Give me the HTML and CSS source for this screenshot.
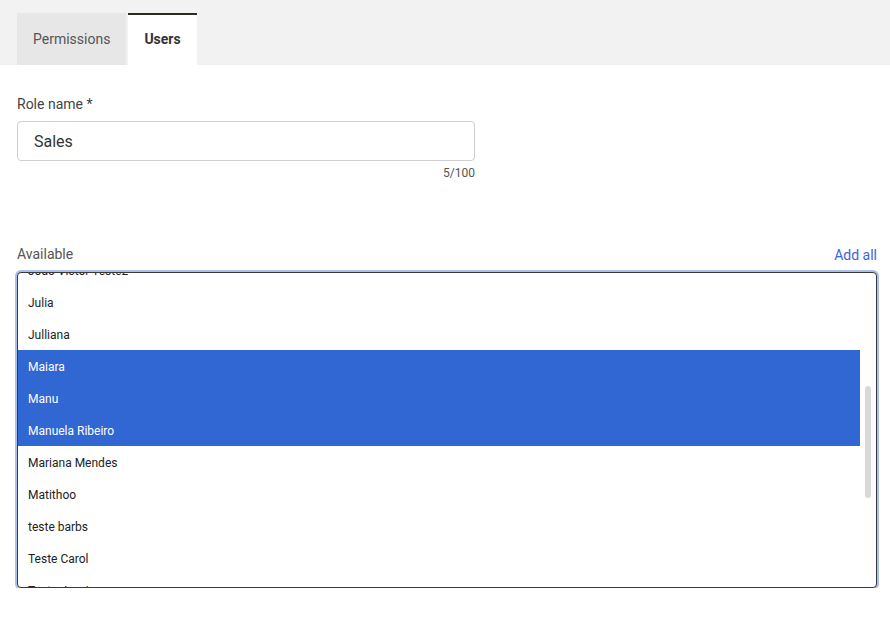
FILE: index.html
```html
<!DOCTYPE html>
<html>
<head>
<meta charset="utf-8">
<link rel="stylesheet" href="styles.css">
</head>
<body>
<div class="tabbar">
  <div class="tab">Permissions</div>
  <div class="tab active">Users</div>
</div>
<div class="content">
  <label class="label">Role name *</label>
  <div class="input">Sales</div>
  <div class="counter">5/100</div>
  <div class="list-head">
    <span class="label-plain">Available</span>
    <a class="add-all">Add all</a>
  </div>
  <div class="listbox">
    <div class="viewport" id="viewport">
      <div class="item">Amanda</div>
      <div class="item">Ana Paula</div>
      <div class="item">Beatriz</div>
      <div class="item">Bruno</div>
      <div class="item">Carlos</div>
      <div class="item">Daniela</div>
      <div class="item">Eduardo</div>
      <div class="item">Fernanda</div>
      <div class="item">Gabriel</div>
      <div class="item">Isabela</div>
      <div class="item">Joao Victor Teste2</div>
      <div class="item">Julia</div>
      <div class="item">Julliana</div>
      <div class="item selected">Maiara</div>
      <div class="item selected">Manu</div>
      <div class="item selected">Manuela Ribeiro</div>
      <div class="item">Mariana Mendes</div>
      <div class="item">Matithoo</div>
      <div class="item">teste barbs</div>
      <div class="item">Teste Carol</div>
      <div class="item">Teste Jessica</div>
      <div class="item">Thiago</div>
      <div class="item">Vanessa</div>
      <div class="item">Vinicius</div>
      <div class="item">Wagner</div>
      <div class="item">Yasmin</div>
      <div class="item">Zeca</div>
    </div>
    <div class="scrolltrack"><div class="scrollthumb"></div></div>
  </div>
</div>
<script>
  document.getElementById('viewport').scrollTop = 339;
</script>
</body>
</html>
```

FILE: styles.css
```css
html, body {
  margin: 0;
  padding: 0;
  background: #ffffff;
  font-family: Roboto, "Liberation Sans", sans-serif;
}

.tabbar {
  display: flex;
  gap: 2px;
  height: 65px;
  box-sizing: border-box;
  padding: 13px 0 0 17px;
  background: #f2f2f2;
}

.tab {
  height: 52px;
  box-sizing: border-box;
  padding: 0 16px;
  display: flex;
  align-items: center;
  background: #e7e7e7;
  color: #555555;
  font-size: 14px;
}

.tab.active {
  background: #ffffff;
  border-top: 2px solid #2b2b22;
  color: #333333;
  font-weight: 700;
  padding-bottom: 2px;
}

.content {
  padding: 30px 13px 0 17px;
}

.label {
  display: block;
  font-size: 14px;
  line-height: 18px;
  color: #444444;
  margin-bottom: 8px;
}

.input {
  width: 458px;
  height: 40px;
  box-sizing: border-box;
  border: 1px solid #cfcfcf;
  border-radius: 4px;
  padding: 0 16px;
  display: flex;
  align-items: center;
  font-size: 16px;
  color: #333333;
}

.counter {
  width: 458px;
  margin-top: 4px;
  text-align: right;
  font-size: 12px;
  line-height: 16px;
  color: #555555;
}

.list-head {
  margin-top: 64px;
  display: flex;
  justify-content: space-between;
  align-items: center;
  height: 18px;
  margin-bottom: 9px;
}

.label-plain {
  font-size: 14px;
  color: #555555;
}

.add-all {
  font-size: 14px;
  color: #3d63dd;
  cursor: pointer;
  padding-top: 2px;
}

.listbox {
  height: 316px;
  box-sizing: border-box;
  border: 1px solid #3a3a3a;
  border-radius: 4px;
  box-shadow: 0 0 0 2px #a9c1ea;
  background: #ffffff;
  display: flex;
  overflow: hidden;
}

.viewport {
  flex: 1;
  min-width: 0;
  height: 100%;
  overflow: hidden;
}

.scrolltrack {
  width: 16px;
  flex: none;
  display: flex;
  justify-content: center;
}

.scrollthumb {
  width: 6px;
  height: 112px;
  margin-top: 113px;
  border-radius: 3px;
  background: #d9d9d9;
}

.item {
  height: 32px;
  box-sizing: border-box;
  padding: 2px 10px 0;
  line-height: 30px;
  font-size: 12px;
  color: #222222;
  white-space: nowrap;
}

.item.selected {
  background: #3067d3;
  color: #ffffff;
}
```
